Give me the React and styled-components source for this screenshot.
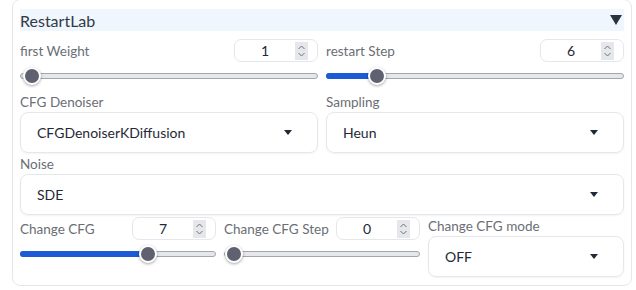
import React from "react";
import styled, { createGlobalStyle } from "styled-components";

const GlobalStyle = createGlobalStyle`
  body {
    margin: 0;
    background: #ffffff;
    font-family: "Lato", "Liberation Sans", sans-serif;
  }
`;

const Page = styled.div`
  width: 636px;
  height: 290px;
  padding: 0 4px 0 12px;
  box-sizing: border-box;
`;

const Panel = styled.div`
  width: 620px;
  height: 287px;
  margin-top: -1px;
  box-sizing: border-box;
  border: 1px solid #e5e7eb;
  border-radius: 8px;
  padding: 9px 7px 8px;
  display: flex;
  flex-direction: column;
`;

const Header = styled.div`
  height: 22px;
  background: #eff6fd;
  display: flex;
  align-items: center;
  justify-content: space-between;
  font-size: 16px;
  color: #333a44;
  padding-right: 2px;
`;

const Row = styled.div`
  display: grid;
  grid-template-columns: repeat(${(p) => p.cols}, 1fr);
  column-gap: 8px;
  margin-top: ${(p) => p.top || 0}px;
`;

const Block = styled.div`
  display: flex;
  flex-direction: column;
`;

const LabelRow = styled.div`
  display: flex;
  align-items: center;
  justify-content: space-between;
  height: 23px;
`;

const Label = styled.div`
  font-size: 13.5px;
  color: #6b6e75;
  line-height: ${(p) => p.lh || 20}px;
`;

const NumberBox = styled.div`
  width: 84px;
  height: 23px;
  box-sizing: border-box;
  border: 1px solid #e5e7eb;
  border-radius: 7px;
  display: flex;
  align-items: center;
  padding-right: 9px;
  font-size: 14px;
  color: #1f2937;
`;

const NumberValue = styled.div`
  flex: 1;
  text-align: center;
`;

const Spinner = styled.div`
  width: 13px;
  height: 18px;
  background: #e5e7eb;
  display: flex;
  align-items: center;
  justify-content: center;
`;

const SliderWrap = styled.div`
  height: 24px;
  display: flex;
  align-items: center;
  margin-top: 2px;
`;

const Track = styled.div`
  position: relative;
  flex: 1;
  height: 6px;
  box-sizing: border-box;
  border: 1px solid #a3a6ad;
  border-radius: 3px;
  background: #e5e7eb;
`;

const Fill = styled.div`
  position: absolute;
  left: -1px;
  top: -1px;
  bottom: -1px;
  background: #1c5ad6;
  border-radius: 3px 0 0 3px;
`;

const Thumb = styled.div`
  position: absolute;
  top: 50%;
  width: 18px;
  height: 18px;
  box-sizing: border-box;
  margin-left: -9px;
  margin-top: -9px;
  border-radius: 50%;
  background: #5f6170;
  border: 2px solid #ffffff;
  box-shadow: 0 1px 3px rgba(0, 0, 0, 0.35);
`;

const Select = styled.div`
  height: 41px;
  box-sizing: border-box;
  border: 1px solid #e5e7eb;
  border-radius: 8px;
  box-shadow: 0 1px 2px rgba(0, 0, 0, 0.05);
  display: flex;
  align-items: center;
  justify-content: space-between;
  padding: 0 25px 0 16px;
  font-size: 14px;
  color: #1f2937;
`;

const Caret = () => (
  <svg width="8" height="5" viewBox="0 0 8 5">
    <path d="M0 0 H8 L4 5 Z" fill="#1f2937" />
  </svg>
);

const Chevrons = () => (
  <svg width="9" height="14" viewBox="0 0 9 14">
    <path d="M1.5 5 L4.5 2 L7.5 5 M1.5 9 L4.5 12 L7.5 9" fill="none" stroke="#6b7280" strokeWidth="1" />
  </svg>
);

const NumberSlider = ({ label, value, pct }) => (
  <Block>
    <LabelRow>
      <Label>{label}</Label>
      <NumberBox>
        <NumberValue>{value}</NumberValue>
        <Spinner>
          <Chevrons />
        </Spinner>
      </NumberBox>
    </LabelRow>
    <SliderWrap>
      <Track>
        {pct > 0.02 && <Fill style={{ width: `calc(9px + (100% - 18px) * ${pct})` }} />}
        <Thumb style={{ left: `calc(9px + (100% - 18px) * ${pct})` }} />
      </Track>
    </SliderWrap>
  </Block>
);

const Dropdown = ({ label, value, lh }) => (
  <Block>
    <Label lh={lh || 20}>{label}</Label>
    <Select>
      <span>{value}</span>
      <Caret />
    </Select>
  </Block>
);

const App = () => (
  <Page>
    <GlobalStyle />
    <Panel>
      <Header>
        <span>RestartLab</span>
        <svg width="12" height="10" viewBox="0 0 12 10">
          <path d="M0 0 H12 L6 10 Z" fill="#2b3340" />
        </svg>
      </Header>
      <Row cols={2} top={8}>
        <NumberSlider label="first Weight" value="1" pct={0.006} />
        <NumberSlider label="restart Step" value="6" pct={0.147} />
      </Row>
      <Row cols={2} top={4}>
        <Dropdown label="CFG Denoiser" value="CFGDenoiserKDiffusion" />
        <Dropdown label="Sampling" value="Heun" />
      </Row>
      <Row cols={1} top={1}>
        <Dropdown label="Noise" value="SDE" />
      </Row>
      <Row cols={3} top={2}>
        <NumberSlider label="Change CFG" value="7" pct={0.67} />
        <NumberSlider label="Change CFG Step" value="0" pct={0} />
        <Dropdown label="Change CFG mode" value="OFF" lh={19} />
      </Row>
    </Panel>
  </Page>
);

export default App;
